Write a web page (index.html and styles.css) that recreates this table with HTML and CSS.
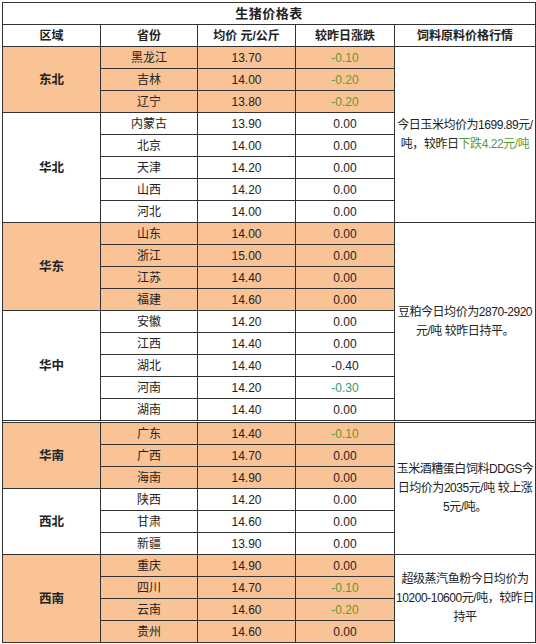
FILE: index.html
```html
<!DOCTYPE html>
<html lang="zh">
<head>
<meta charset="utf-8">
<title>生猪价格表</title>
<link rel="stylesheet" href="styles.css">
</head>
<body>
<table class="sheet">
  <colgroup>
    <col class="c1"><col class="c2"><col class="c3"><col class="c4"><col class="c5">
  </colgroup>
  <tr class="title"><td colspan="5">生猪价格表</td></tr>
  <tr class="head"><td>区域</td><td>省份</td><td>均价 元/公斤</td><td>较昨日涨跌</td><td>饲料原料价格行情</td></tr>

  <tr class="o"><td rowspan="3" class="region">东北</td><td>黑龙江</td><td>13.70</td><td class="g1">-0.10</td>
    <td rowspan="8" class="feed">今日玉米均价为1699.89元/<br>吨，较昨日<span class="g1">下跌4.22元/吨</span></td></tr>
  <tr class="o"><td>吉林</td><td>14.00</td><td class="g1">-0.20</td></tr>
  <tr class="o"><td>辽宁</td><td>13.80</td><td class="g1">-0.20</td></tr>

  <tr><td rowspan="5" class="region">华北</td><td>内蒙古</td><td>13.90</td><td>0.00</td></tr>
  <tr><td>北京</td><td>14.00</td><td>0.00</td></tr>
  <tr><td>天津</td><td>14.20</td><td>0.00</td></tr>
  <tr><td>山西</td><td>14.20</td><td>0.00</td></tr>
  <tr><td>河北</td><td>14.00</td><td>0.00</td></tr>

  <tr class="o"><td rowspan="4" class="region">华东</td><td>山东</td><td>14.00</td><td>0.00</td>
    <td rowspan="9" class="feed">豆粕今日均价为2870-2920<br>元/吨 较昨日持平。</td></tr>
  <tr class="o"><td>浙江</td><td>15.00</td><td>0.00</td></tr>
  <tr class="o"><td>江苏</td><td>14.40</td><td>0.00</td></tr>
  <tr class="o"><td>福建</td><td>14.60</td><td>0.00</td></tr>

  <tr><td rowspan="5" class="region">华中</td><td>安徽</td><td>14.20</td><td>0.00</td></tr>
  <tr><td>江西</td><td>14.40</td><td>0.00</td></tr>
  <tr><td>湖北</td><td>14.40</td><td>-0.40</td></tr>
  <tr><td>河南</td><td>14.20</td><td class="g2">-0.30</td></tr>
  <tr><td>湖南</td><td>14.40</td><td>0.00</td></tr>

  <tr class="gap"><td colspan="5"></td></tr>

  <tr class="o"><td rowspan="3" class="region">华南</td><td>广东</td><td>14.40</td><td class="g1">-0.10</td>
    <td rowspan="6" class="feed">玉米酒糟蛋白饲料DDGS今<br>日均价为2035元/吨 较上涨<br>5元/吨。</td></tr>
  <tr class="o"><td>广西</td><td>14.70</td><td>0.00</td></tr>
  <tr class="o"><td>海南</td><td>14.90</td><td>0.00</td></tr>

  <tr><td rowspan="3" class="region">西北</td><td>陕西</td><td>14.20</td><td>0.00</td></tr>
  <tr><td>甘肃</td><td>14.60</td><td>0.00</td></tr>
  <tr><td>新疆</td><td>13.90</td><td>0.00</td></tr>

  <tr class="o"><td rowspan="4" class="region">西南</td><td>重庆</td><td>14.90</td><td>0.00</td>
    <td rowspan="4" class="feed">超级蒸汽鱼粉今日均价为<br>10200-10600元/吨，较昨日<br>持平</td></tr>
  <tr class="o"><td>四川</td><td>14.70</td><td class="g1">-0.10</td></tr>
  <tr class="o"><td>云南</td><td>14.60</td><td class="g1">-0.20</td></tr>
  <tr class="o"><td>贵州</td><td>14.60</td><td>0.00</td></tr>
</table>
</body>
</html>
```

FILE: styles.css
```css
html, body {
  margin: 0;
  padding: 0;
  background: #ffffff;
}

body {
  padding: 2px 0 0 2px;
  font-family: "Liberation Sans", "Noto Sans CJK SC", sans-serif;
  font-size: 12px;
  color: #222222;
}

.sheet {
  border-collapse: collapse;
  table-layout: fixed;
  width: 533px;
}

.c1 { width: 98px; }
.c2 { width: 97px; }
.c3 { width: 98px; }
.c4 { width: 99px; }
.c5 { width: 141px; }

.sheet td {
  border: 1px solid #333333;
  height: 21px;
  padding: 0;
  text-align: center;
  vertical-align: middle;
  line-height: 14px;
  white-space: nowrap;
}

.sheet .o td {
  background: #fac396;
}

.sheet .o td.feed {
  background: #ffffff;
}

.title td {
  font-weight: bold;
  font-size: 13px;
  letter-spacing: 0.5px;
}

.head td {
  font-weight: bold;
  font-size: 12px;
}

.sheet td.region {
  font-weight: bold;
  font-size: 12.5px;
}

.sheet td.feed {
  padding: 0;
  line-height: 19px;
  font-size: 12px;
  letter-spacing: -0.45px;
  background: #ffffff;
  overflow: hidden;
}

.g1 { color: #5e9a32; }
.g2 { color: #2f9c6c; }

.sheet .gap td {
  height: 1px;
  line-height: 1px;
  font-size: 1px;
  background: #ffffff;
}
```
